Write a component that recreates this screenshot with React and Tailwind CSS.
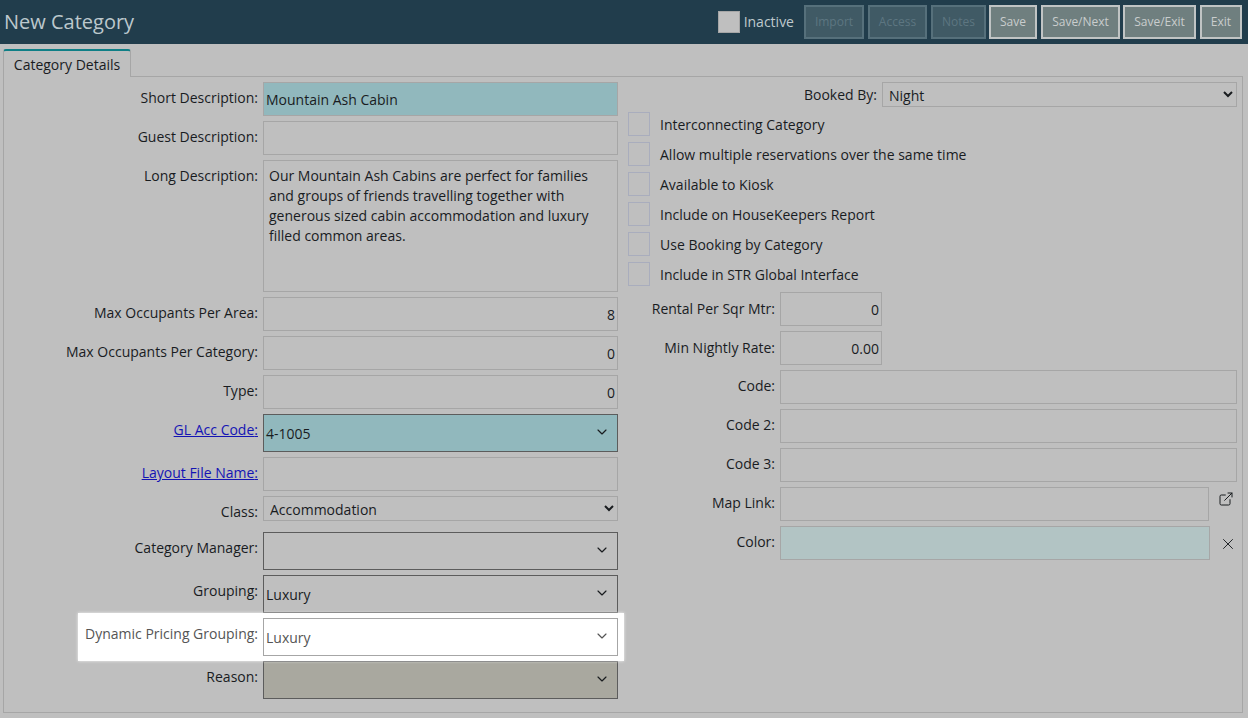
import { ChevronDown, ExternalLink, X } from 'lucide-react'

const buttons = [
  { label: 'Import', off: true, cls: 'w-[60px] mr-1' },
  { label: 'Access', off: true, cls: 'w-[59px] mr-1' },
  { label: 'Notes', off: true, cls: 'w-[55px] mr-[3px]' },
  { label: 'Save', cls: 'w-[48px] mr-1' },
  { label: 'Save/Next', cls: 'w-[79px] mr-[3px]' },
  { label: 'Save/Exit', cls: 'w-[73px] mr-1' },
  { label: 'Exit', cls: 'w-[42px]' },
]

const checks = [
  'Interconnecting Category',
  'Allow multiple reservations over the same time',
  'Available to Kiosk',
  'Include on HouseKeepers Report',
  'Use Booking by Category',
  'Include in STR Global Interface',
]

const inputCls = 'h-[34px] w-full border border-[#a6a6a6] px-[2px] text-sm text-[#191c1f] outline-none'
const selectCls = 'h-[25px] w-[355px] border border-[#a6a6a6] bg-transparent pl-[2px] pt-[2px] text-sm text-[#191c1f] outline-none'

function Label({ children, link, width = 'w-[259px]', pad = 'pt-[6px]' }) {
  return (
    <label className={`${width} ${pad} shrink-0 pr-[5px] text-right text-sm ${link ? 'text-[#1414b4] underline' : 'text-[#191c1f]'}`}>
      {children}
    </label>
  )
}

function TextRow({ label, value = '', right, teal, link, width, pad }) {
  return (
    <div className="flex">
      <Label link={link} width={width} pad={pad}>{label}:</Label>
      <input
        readOnly
        value={value}
        className={`${inputCls} ${right ? 'text-right' : ''} ${teal ? 'bg-[#91b8bd]' : 'bg-transparent'}`}
      />
    </div>
  )
}

function ComboRow({ label, value, link, bg = 'bg-transparent' }) {
  return (
    <div className="flex">
      <Label link={link}>{label}:</Label>
      <div className={`flex h-[38px] w-[355px] items-center justify-between border border-[#5c5c5c] pl-[2px] pr-[7px] text-sm text-[#191c1f] ${bg}`}>
        <span className="pt-[2px]">{value}</span>
        <ChevronDown size={16} strokeWidth={1.75} className="-mt-[2px]" />
      </div>
    </div>
  )
}

export default function App() {
  return (
    <div className="flex h-[718px] w-[1248px] flex-col overflow-hidden bg-[#bfbfbf] font-['Open_Sans',sans-serif]">
      {/* Top bar */}
      <header className="flex h-[44px] shrink-0 items-center bg-[#213d4c] pl-[4px] pr-[5px]">
        <h1 className="pb-[1px] text-xl text-[#bcc8cd]">New Category</h1>
        <div className="ml-auto flex items-center pr-px">
          <span className="mr-[4px] h-[22px] w-[22px] border border-[#a6a6a6] bg-[#bfbfbf]" />
          <span className="mr-[10px] text-sm text-[#bfc9cd]">Inactive</span>
          {buttons.map((b) => (
            <button
              key={b.label}
              className={`h-[34px] border-2 text-xs ${b.cls} ${
                b.off
                  ? 'border-[#56707b] bg-[#405a65] text-[#5d7681]'
                  : 'border-[#c0c4c4] bg-[#6f7f7f] text-[#c9cdcd]'
              }`}
            >
              {b.label}
            </button>
          ))}
        </div>
      </header>

      {/* Tab */}
      <div className="flex shrink-0 pl-[3px] pt-[5px]">
        <div className="relative z-10 -mb-px flex h-[28px] w-[128px] items-center justify-center rounded-t-[3px] border-x border-t-2 border-x-[#a6a6a6] border-t-[#0f7f86] bg-[#bfbfbf] pt-px text-sm text-[#191c1f]">
          Category Details
        </div>
      </div>

      {/* Panel */}
      <div className="mb-[5px] ml-[3px] mr-[5px] flex flex-1 gap-[10px] border border-[#a6a6a6] pt-[5px]">
        <div className="flex w-[614px] shrink-0 flex-col gap-[5px]">
          <TextRow label="Short Description" value="Mountain Ash Cabin" teal />
          <TextRow label="Guest Description" />
          <div className="flex">
            <Label>Long Description:</Label>
            <textarea
              readOnly
              value="Our Mountain Ash Cabins are perfect for families and groups of friends travelling together with generous sized cabin accommodation and luxury filled common areas."
              className="h-[132px] w-[355px] resize-none border border-[#a6a6a6] bg-transparent px-[5px] py-[5px] text-sm leading-[20px] text-[#191c1f] outline-none"
            />
          </div>
          <TextRow label="Max Occupants Per Area" value="8" right />
          <TextRow label="Max Occupants Per Category" value="0" right />
          <TextRow label="Type" value="0" right />
          <ComboRow label="GL Acc Code" value="4-1005" link bg="bg-[#91b8bd]" />
          <TextRow label="Layout File Name" link />
          <div className="mb-[5px] flex">
            <Label>Class:</Label>
            <select className={selectCls}>
              <option>Accommodation</option>
            </select>
          </div>
          <ComboRow label="Category Manager" value="" />
          <ComboRow label="Grouping" value="Luxury" />

          {/* Highlighted row */}
          <div className="relative flex">
            <div className="absolute -top-[5px] bottom-[-5px] left-[74px] right-[-6px] bg-white shadow-[0_0_3px_rgba(255,255,255,0.8)]" />
            <label className="relative w-[259px] shrink-0 pt-[6px] pr-[5px] text-right text-sm text-[#555]">
              Dynamic Pricing Grouping:
            </label>
            <div className="relative flex h-[38px] w-[355px] items-center justify-between border border-[#a6a6a6] bg-white pl-[2px] pr-[7px] text-sm text-[#555]">
              <span className="pt-[2px]">Luxury</span>
              <ChevronDown size={16} strokeWidth={1.75} className="-mt-[2px]" />
            </div>
          </div>

          <ComboRow label="Reason" value="" bg="bg-[#a9a89f]" />
        </div>

        <div className="flex w-[609px] flex-col">
          <div className="flex justify-end">
            <label className="pt-[3px] pr-[5px] text-sm text-[#191c1f]">Booked By:</label>
            <select className={selectCls}>
              <option>Night</option>
            </select>
          </div>
          <div className="mb-[6px] mt-[5px] flex flex-col gap-[6px]">
            {checks.map((c) => (
              <div key={c} className="flex items-center">
                <span className="mr-[10px] h-[24px] w-[22px] border border-[#a9adbd]" />
                <span className="pt-px text-sm text-[#191c1f]">{c}</span>
              </div>
            ))}
          </div>
          <div className="flex flex-col gap-[5px]">
            <div className="w-[254px]">
              <TextRow label="Rental Per Sqr Mtr" value="0" right width="w-[152px]" pad="pt-[7px]" />
            </div>
            <div className="w-[254px]">
              <TextRow label="Min Nightly Rate" value="0.00" right width="w-[152px]" pad="pt-[7px]" />
            </div>
            <TextRow label="Code" width="w-[152px]" />
            <TextRow label="Code 2" width="w-[152px]" />
            <TextRow label="Code 3" width="w-[152px]" />
            <div className="flex items-start">
              <div className="w-[581px] shrink-0">
                <TextRow label="Map Link" width="w-[152px]" />
              </div>
              <ExternalLink size={16} strokeWidth={1.5} className="ml-[9px] mt-[4px] text-[#191c1f]" />
            </div>
            <div className="flex items-start">
              <div className="flex w-[582px] shrink-0">
                <Label width="w-[152px]">Color:</Label>
                <div className="h-[34px] w-full border border-[#a6a6a6] bg-[#b2c4c4]" />
              </div>
              <X size={18} strokeWidth={1.25} className="ml-[9px] mt-[9px] text-[#191c1f]" />
            </div>
          </div>
        </div>
      </div>
    </div>
  )
}
